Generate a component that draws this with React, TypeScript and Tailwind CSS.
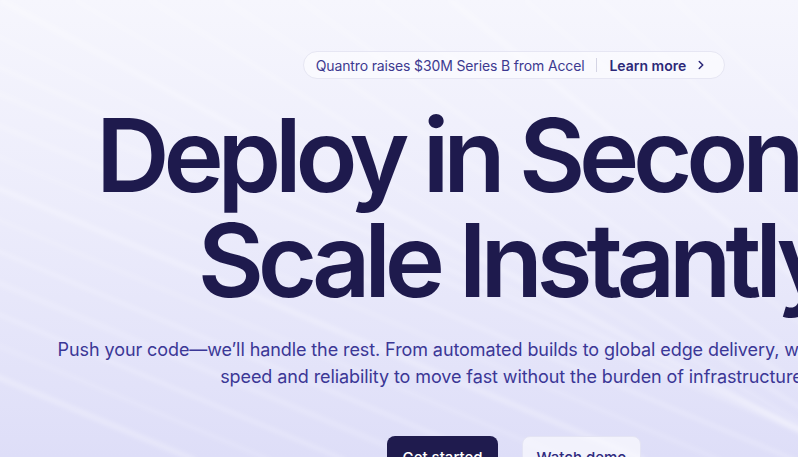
import { ChevronRight } from "lucide-react";

// faint light streaks across the background, shallow on the left, steeper on the right
const streaks = Array.from({ length: 22 }, (_, i) => {
    const xTop = -900 + i * 75;
    const t = Math.min(1, Math.max(0, (xTop + 200) / 1100));
    const slope = 0.42 + t * 0.65;
    return { xTop, slope };
});

function Streaks() {
    return (
        <svg className="absolute inset-0 w-full h-full pointer-events-none" viewBox="0 0 798 457" preserveAspectRatio="none">
            <defs>
                <filter id="soft" x="-10%" y="-10%" width="120%" height="120%">
                    <feGaussianBlur stdDeviation="2" />
                </filter>
            </defs>
            <g filter="url(#soft)">
                {streaks.map((s, i) => (
                    <line
                        key={i}
                        x1={s.xTop}
                        y1={0}
                        x2={s.xTop + 460 / s.slope}
                        y2={460}
                        stroke="#ffffff"
                        strokeOpacity={i % 2 === 0 ? 0.28 : 0.18}
                        strokeWidth={i % 3 === 0 ? 5 : 3}
                    />
                ))}
            </g>
        </svg>
    );
}

export default function App() {
    return (
        <div className="relative w-full h-[457px] overflow-hidden bg-gradient-to-b from-[#f6f6fd] via-[#ebebfb] to-[#dedef8] font-['Inter',sans-serif]">
            <Streaks />
            <div className="relative w-[1028px] flex flex-col items-center pt-[51px]">
                {/* announcement pill */}
                <div className="h-[28px] flex flex-row items-center pl-3 pr-4 rounded-full border border-[#e6e6f3] bg-white/50 text-[14px] text-[#3d3990]">
                    <span className="tracking-[-0.01em]">Quantro raises $30M Series B from Accel</span>
                    <span className="mx-3 h-[14px] w-px bg-[#d4d4e4]" />
                    <span className="font-semibold text-[#2c2878]">Learn more</span>
                    <ChevronRight className="ml-2 w-[14px] h-[14px] text-[#2c2878]" strokeWidth={2.6} />
                </div>

                <h1 className="mt-[24px] text-center whitespace-nowrap text-[102px] leading-[105px] font-semibold tracking-[-0.061em] text-[#1e1a4d]">
                    Deploy in Seconds,
                    <br />
                    Scale Instantly
                </h1>

                <p className="mt-[23px] text-center whitespace-nowrap text-[18px] leading-[27px] text-[#3b3796] tracking-[-0.005em]">
                    Push your code—we’ll handle the rest. From automated builds to global edge delivery, we give your team the
                    <br />
                    speed and reliability to move fast without the burden of infrastructure.
                </p>

                <div className="mt-[46px] flex flex-row gap-6">
                    <button className="h-[44px] w-[111px] rounded-lg bg-[#1f1b4e] text-white text-[15px] font-medium">
                        Get started
                    </button>
                    <button className="h-[44px] w-[119px] rounded-lg border border-[#e4e4f4] bg-white/60 text-[#2f2b7e] text-[15px] font-medium">
                        Watch demo
                    </button>
                </div>
            </div>
        </div>
    );
}
